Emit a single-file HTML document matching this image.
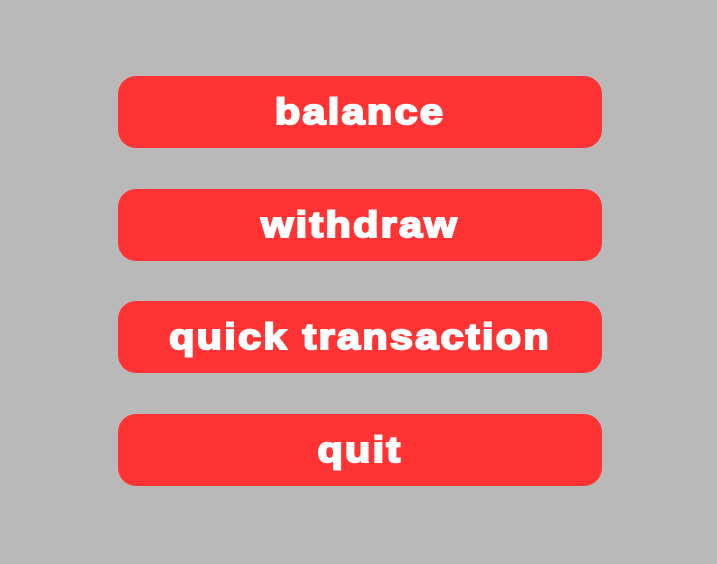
<!DOCTYPE html>
<html><head><style>
html,body{margin:0;padding:0;}
body{width:717px;height:564px;background:#b9b9b9;position:relative;overflow:hidden;}
.b{position:absolute;left:118px;width:484px;height:72px;border-radius:18px;background:#ff3333;color:#fff;
font-family:"Liberation Sans",Arial,sans-serif;font-weight:bold;font-size:36px;letter-spacing:2px;
-webkit-text-stroke:2px #fff;text-align:center;line-height:72px;}
.b span{display:inline-block;transform:scaleX(1.15);}
</style></head><body>
<div class="b" style="top:76px"><span>balance</span></div>
<div class="b" style="top:189px"><span>withdraw</span></div>
<div class="b" style="top:301px"><span>quick transaction</span></div>
<div class="b" style="top:414px"><span>quit</span></div>
</body></html>
